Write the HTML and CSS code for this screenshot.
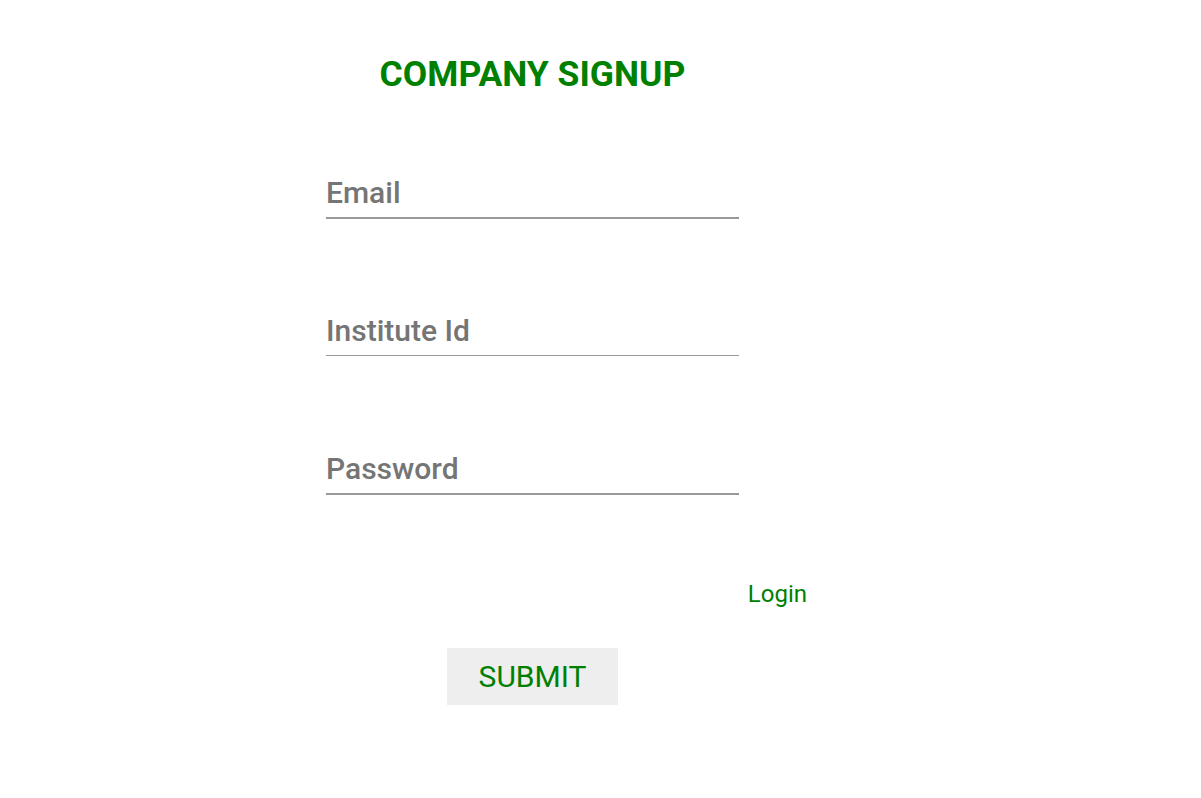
FILE: index.html
```html
<!DOCTYPE html>
<html>
<head>
<meta charset="utf-8">
<link rel="stylesheet" href="styles.css">
</head>
<body>
<div class="page">
  <form class="signup">
    <h1 class="title">COMPANY SIGNUP</h1>
    <input class="field" type="email" placeholder="Email">
    <input class="field field-thin" type="text" placeholder="Institute Id">
    <input class="field" type="password" placeholder="Password">
    <div class="login-row"><a class="login" href="#">Login</a></div>
    <button class="submit" type="button">SUBMIT</button>
  </form>
</div>
</body>
</html>
```
FILE: styles.css
```css
html, body {
  margin: 0;
  padding: 0;
  background: #fff;
  font-family: Roboto, "Noto Sans", sans-serif;
}
.page {
  padding-left: 326px;
}
.signup {
  width: 413px;
  display: flex;
  flex-direction: column;
  align-items: center;
}
.title {
  margin: 52px 0 0;
  font-size: 35.5px;
  font-weight: 700;
  color: #008000;
  line-height: 44px;
}
.field {
  box-sizing: border-box;
  width: 100%;
  height: 45px;
  border: none;
  border-bottom: 2px solid #999;
  outline: none;
  padding: 0 0 7px;
  font-family: Roboto, sans-serif;
  font-size: 30px;
  font-weight: 500;
  line-height: 36px;
  color: #757575;
  margin-top: 78px;
  background: transparent;
}
.field-thin {
  height: 44px;
  border-bottom-width: 1px;
  margin-top: 93px;
}
.field-thin + .field {
  margin-top: 94px;
}
.field::placeholder {
  color: #757575;
}
.login-row {
  align-self: stretch;
  display: flex;
  justify-content: flex-end;
  margin-right: -68px;
  margin-top: 85px;
}
.login {
  color: #008000;
  text-decoration: none;
  font-size: 24px;
  font-weight: 400;
  line-height: 28px;
}
.submit {
  margin-top: 40px;
  width: 171px;
  height: 57px;
  border: none;
  background: #eee;
  color: #008000;
  font-family: Roboto, sans-serif;
  font-size: 30px;
  font-weight: 400;
  padding: 0;
}
```
